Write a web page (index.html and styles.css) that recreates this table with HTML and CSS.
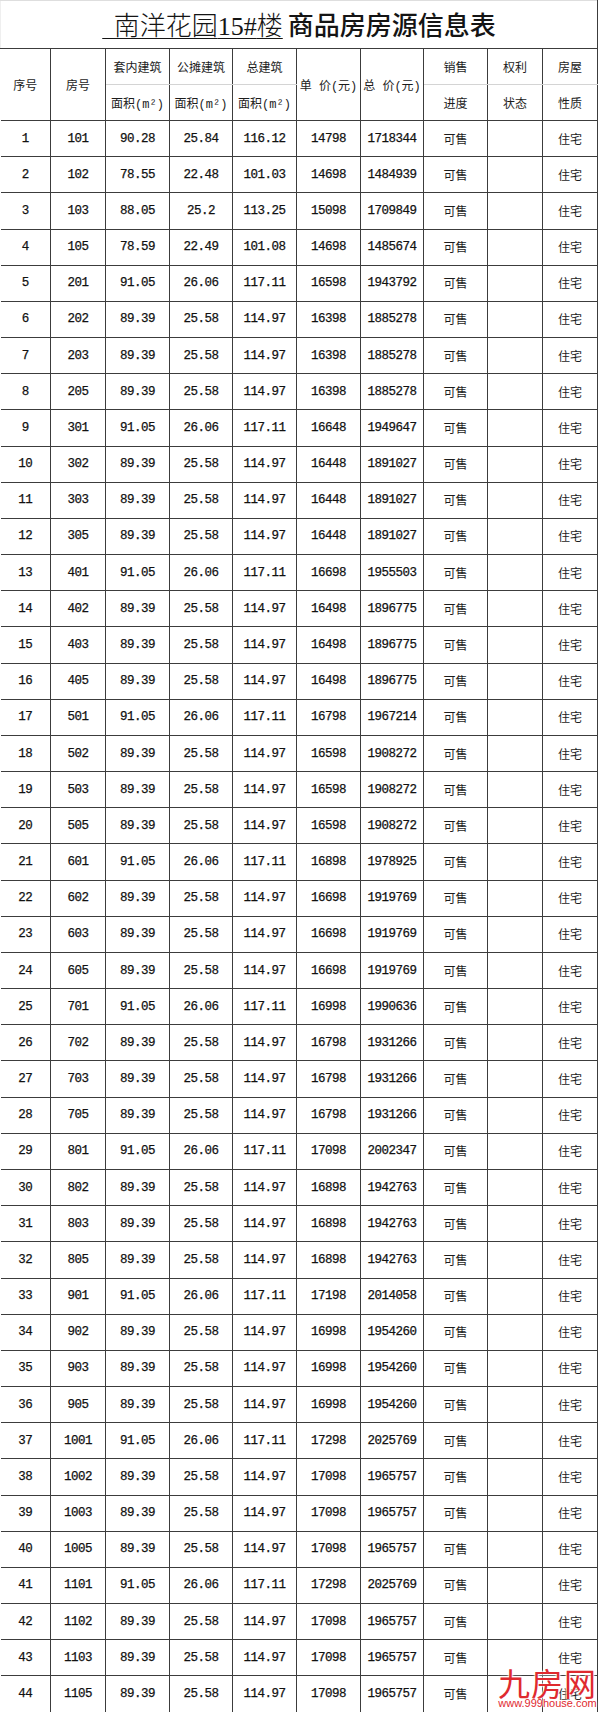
FILE: index.html
```html
<!DOCTYPE html>
<html lang="zh-CN">
<head>
<meta charset="utf-8">
<title>南洋花园15#楼 商品房房源信息表</title>
<link rel="stylesheet" href="styles.css">
</head>
<body>
<div class="page">
<table class="sheet">
<colgroup>
<col class="c50"><col class="c55"><col class="c64"><col class="c63"><col class="c64"><col class="c64"><col class="c63"><col class="c64"><col class="c55"><col class="c55">
</colgroup>
<tr class="title-row"><td colspan="10" class="title"><span class="t1">&nbsp;&nbsp;南洋花园<span class="latin">15#</span>楼</span><span class="t2">商品房房源信息表</span></td></tr>
<tr class="head"><th rowspan="2">序号</th><th rowspan="2">房号</th><th class="top">套内建筑</th><th class="top">公摊建筑</th><th class="top">总建筑</th><th rowspan="2">单 价(元)</th><th rowspan="2">总 价(元)</th><th class="top">销售</th><th class="top">权利</th><th class="top">房屋</th></tr>
<tr class="head"><th class="bot">面积(m²)</th><th class="bot">面积(m²)</th><th class="bot">面积(m²)</th><th class="bot">进度</th><th class="bot">状态</th><th class="bot">性质</th></tr>
<tr><td>1</td><td>101</td><td>90.28</td><td>25.84</td><td>116.12</td><td>14798</td><td>1718344</td><td>可售</td><td></td><td>住宅</td></tr>
<tr><td>2</td><td>102</td><td>78.55</td><td>22.48</td><td>101.03</td><td>14698</td><td>1484939</td><td>可售</td><td></td><td>住宅</td></tr>
<tr><td>3</td><td>103</td><td>88.05</td><td>25.2</td><td>113.25</td><td>15098</td><td>1709849</td><td>可售</td><td></td><td>住宅</td></tr>
<tr><td>4</td><td>105</td><td>78.59</td><td>22.49</td><td>101.08</td><td>14698</td><td>1485674</td><td>可售</td><td></td><td>住宅</td></tr>
<tr><td>5</td><td>201</td><td>91.05</td><td>26.06</td><td>117.11</td><td>16598</td><td>1943792</td><td>可售</td><td></td><td>住宅</td></tr>
<tr><td>6</td><td>202</td><td>89.39</td><td>25.58</td><td>114.97</td><td>16398</td><td>1885278</td><td>可售</td><td></td><td>住宅</td></tr>
<tr><td>7</td><td>203</td><td>89.39</td><td>25.58</td><td>114.97</td><td>16398</td><td>1885278</td><td>可售</td><td></td><td>住宅</td></tr>
<tr><td>8</td><td>205</td><td>89.39</td><td>25.58</td><td>114.97</td><td>16398</td><td>1885278</td><td>可售</td><td></td><td>住宅</td></tr>
<tr><td>9</td><td>301</td><td>91.05</td><td>26.06</td><td>117.11</td><td>16648</td><td>1949647</td><td>可售</td><td></td><td>住宅</td></tr>
<tr><td>10</td><td>302</td><td>89.39</td><td>25.58</td><td>114.97</td><td>16448</td><td>1891027</td><td>可售</td><td></td><td>住宅</td></tr>
<tr><td>11</td><td>303</td><td>89.39</td><td>25.58</td><td>114.97</td><td>16448</td><td>1891027</td><td>可售</td><td></td><td>住宅</td></tr>
<tr><td>12</td><td>305</td><td>89.39</td><td>25.58</td><td>114.97</td><td>16448</td><td>1891027</td><td>可售</td><td></td><td>住宅</td></tr>
<tr><td>13</td><td>401</td><td>91.05</td><td>26.06</td><td>117.11</td><td>16698</td><td>1955503</td><td>可售</td><td></td><td>住宅</td></tr>
<tr><td>14</td><td>402</td><td>89.39</td><td>25.58</td><td>114.97</td><td>16498</td><td>1896775</td><td>可售</td><td></td><td>住宅</td></tr>
<tr><td>15</td><td>403</td><td>89.39</td><td>25.58</td><td>114.97</td><td>16498</td><td>1896775</td><td>可售</td><td></td><td>住宅</td></tr>
<tr><td>16</td><td>405</td><td>89.39</td><td>25.58</td><td>114.97</td><td>16498</td><td>1896775</td><td>可售</td><td></td><td>住宅</td></tr>
<tr><td>17</td><td>501</td><td>91.05</td><td>26.06</td><td>117.11</td><td>16798</td><td>1967214</td><td>可售</td><td></td><td>住宅</td></tr>
<tr><td>18</td><td>502</td><td>89.39</td><td>25.58</td><td>114.97</td><td>16598</td><td>1908272</td><td>可售</td><td></td><td>住宅</td></tr>
<tr><td>19</td><td>503</td><td>89.39</td><td>25.58</td><td>114.97</td><td>16598</td><td>1908272</td><td>可售</td><td></td><td>住宅</td></tr>
<tr><td>20</td><td>505</td><td>89.39</td><td>25.58</td><td>114.97</td><td>16598</td><td>1908272</td><td>可售</td><td></td><td>住宅</td></tr>
<tr><td>21</td><td>601</td><td>91.05</td><td>26.06</td><td>117.11</td><td>16898</td><td>1978925</td><td>可售</td><td></td><td>住宅</td></tr>
<tr><td>22</td><td>602</td><td>89.39</td><td>25.58</td><td>114.97</td><td>16698</td><td>1919769</td><td>可售</td><td></td><td>住宅</td></tr>
<tr><td>23</td><td>603</td><td>89.39</td><td>25.58</td><td>114.97</td><td>16698</td><td>1919769</td><td>可售</td><td></td><td>住宅</td></tr>
<tr><td>24</td><td>605</td><td>89.39</td><td>25.58</td><td>114.97</td><td>16698</td><td>1919769</td><td>可售</td><td></td><td>住宅</td></tr>
<tr><td>25</td><td>701</td><td>91.05</td><td>26.06</td><td>117.11</td><td>16998</td><td>1990636</td><td>可售</td><td></td><td>住宅</td></tr>
<tr><td>26</td><td>702</td><td>89.39</td><td>25.58</td><td>114.97</td><td>16798</td><td>1931266</td><td>可售</td><td></td><td>住宅</td></tr>
<tr><td>27</td><td>703</td><td>89.39</td><td>25.58</td><td>114.97</td><td>16798</td><td>1931266</td><td>可售</td><td></td><td>住宅</td></tr>
<tr><td>28</td><td>705</td><td>89.39</td><td>25.58</td><td>114.97</td><td>16798</td><td>1931266</td><td>可售</td><td></td><td>住宅</td></tr>
<tr><td>29</td><td>801</td><td>91.05</td><td>26.06</td><td>117.11</td><td>17098</td><td>2002347</td><td>可售</td><td></td><td>住宅</td></tr>
<tr><td>30</td><td>802</td><td>89.39</td><td>25.58</td><td>114.97</td><td>16898</td><td>1942763</td><td>可售</td><td></td><td>住宅</td></tr>
<tr><td>31</td><td>803</td><td>89.39</td><td>25.58</td><td>114.97</td><td>16898</td><td>1942763</td><td>可售</td><td></td><td>住宅</td></tr>
<tr><td>32</td><td>805</td><td>89.39</td><td>25.58</td><td>114.97</td><td>16898</td><td>1942763</td><td>可售</td><td></td><td>住宅</td></tr>
<tr><td>33</td><td>901</td><td>91.05</td><td>26.06</td><td>117.11</td><td>17198</td><td>2014058</td><td>可售</td><td></td><td>住宅</td></tr>
<tr><td>34</td><td>902</td><td>89.39</td><td>25.58</td><td>114.97</td><td>16998</td><td>1954260</td><td>可售</td><td></td><td>住宅</td></tr>
<tr><td>35</td><td>903</td><td>89.39</td><td>25.58</td><td>114.97</td><td>16998</td><td>1954260</td><td>可售</td><td></td><td>住宅</td></tr>
<tr><td>36</td><td>905</td><td>89.39</td><td>25.58</td><td>114.97</td><td>16998</td><td>1954260</td><td>可售</td><td></td><td>住宅</td></tr>
<tr><td>37</td><td>1001</td><td>91.05</td><td>26.06</td><td>117.11</td><td>17298</td><td>2025769</td><td>可售</td><td></td><td>住宅</td></tr>
<tr><td>38</td><td>1002</td><td>89.39</td><td>25.58</td><td>114.97</td><td>17098</td><td>1965757</td><td>可售</td><td></td><td>住宅</td></tr>
<tr><td>39</td><td>1003</td><td>89.39</td><td>25.58</td><td>114.97</td><td>17098</td><td>1965757</td><td>可售</td><td></td><td>住宅</td></tr>
<tr><td>40</td><td>1005</td><td>89.39</td><td>25.58</td><td>114.97</td><td>17098</td><td>1965757</td><td>可售</td><td></td><td>住宅</td></tr>
<tr><td>41</td><td>1101</td><td>91.05</td><td>26.06</td><td>117.11</td><td>17298</td><td>2025769</td><td>可售</td><td></td><td>住宅</td></tr>
<tr><td>42</td><td>1102</td><td>89.39</td><td>25.58</td><td>114.97</td><td>17098</td><td>1965757</td><td>可售</td><td></td><td>住宅</td></tr>
<tr><td>43</td><td>1103</td><td>89.39</td><td>25.58</td><td>114.97</td><td>17098</td><td>1965757</td><td>可售</td><td></td><td>住宅</td></tr>
<tr><td>44</td><td>1105</td><td>89.39</td><td>25.58</td><td>114.97</td><td>17098</td><td>1965757</td><td>可售</td><td></td><td>住宅</td></tr>
</table>
<div class="watermark">
<div class="wm-name">九房网</div>
<div class="wm-url">www.999house.com</div>
</div>
</div>
</body>
</html>
```
FILE: styles.css
```css
html, body {
  margin: 0;
  padding: 0;
  background: #ffffff;
}

.page {
  position: relative;
  width: 600px;
  height: 1712px;
  overflow: hidden;
}

.sheet {
  border-collapse: collapse;
  table-layout: fixed;
  width: 597px;
  font-family: "Liberation Mono", "Noto Sans CJK SC", monospace;
  font-size: 12.5px;
  letter-spacing: -0.5px;
  color: #111111;
}

.c50 { width: 50px; }
.c55 { width: 55px; }
.c63 { width: 63px; }
.c64 { width: 64px; }

.sheet td,
.sheet th {
  border: 1px solid #3c3c3c;
  padding: 0;
  text-align: center;
  vertical-align: middle;
  white-space: nowrap;
  font-weight: normal;
  -webkit-text-stroke: 0.25px #111;
}

.sheet td:nth-child(8),
.sheet td:nth-child(10) {
  font-size: 12px;
  letter-spacing: 0;
  -webkit-text-stroke: 0;
  color: #1c1c1c;
}

.sheet tr > :first-child {
  border-left: none;
}

.sheet tr {
  height: 36.18px;
}

.sheet tr.title-row {
  height: 48px;
}

.sheet tr.head {
  height: 36px;
}

.sheet th {
  font-size: 12px;
  letter-spacing: 0;
  -webkit-text-stroke: 0;
  color: #1c1c1c;
}

.sheet th.top {
  border-bottom: 1px solid #d4d4d4;
}

.sheet th.bot {
  border-top: 1px solid #d4d4d4;
}

.sheet td.title {
  border-top: 1px solid #dedede;
  border-left: 1px solid #efefef;
  font-size: 26px;
  line-height: 30px;
  letter-spacing: 0;
  color: #141414;
  padding-top: 2px;
  -webkit-text-stroke: 0;
}

.t1 {
  font-family: "Noto Sans CJK SC", sans-serif;
  font-weight: 300;
  text-decoration: underline;
  text-decoration-thickness: 1px;
  text-underline-offset: 3px;
}

.t1 .latin {
  font-family: "Liberation Serif", serif;
}

.t2 {
  font-family: "Noto Sans CJK SC", sans-serif;
  font-weight: 500;
  margin-left: 5px;
}

.watermark {
  position: absolute;
  left: 495px;
  top: 1667px;
  width: 105px;
  color: #df2a2f;
  text-align: center;
}

.wm-name {
  font-family: "Noto Sans CJK SC", sans-serif;
  font-size: 32px;
  line-height: 30px;
  letter-spacing: 1px;
  font-weight: 400;
  text-shadow: 0 0 2px #fff, 0 0 2px #fff, 0 0 3px #fff;
}

.wm-url {
  font-family: "Liberation Sans", sans-serif;
  font-size: 11px;
  line-height: 12px;
  text-shadow: 0 0 2px #fff, 0 0 2px #fff;
}
```
